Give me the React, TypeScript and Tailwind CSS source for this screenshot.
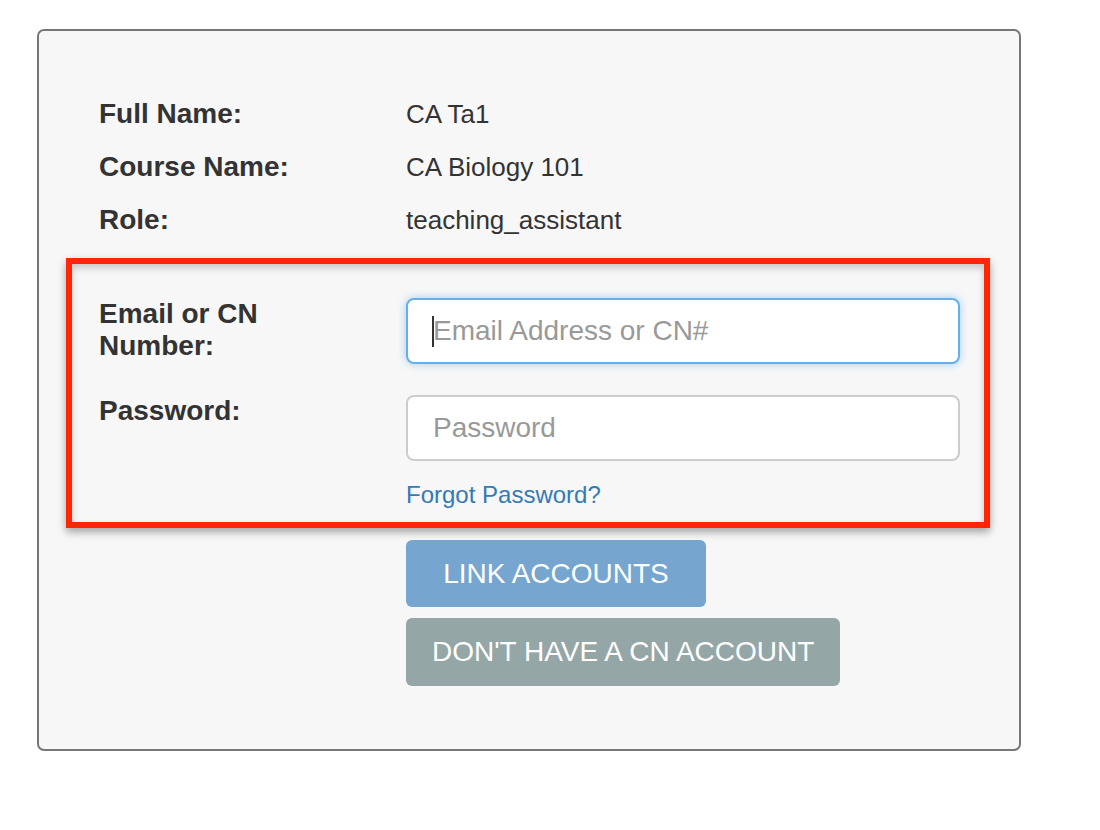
import React from 'react'

const info = [
  { label: 'Full Name:', value: 'CA Ta1' },
  { label: 'Course Name:', value: 'CA Biology 101' },
  { label: 'Role:', value: 'teaching_assistant' },
]

export default function App() {
  return (
    <div className="min-h-[830px] w-[1100px] bg-white pl-[37px] pt-[29px] font-['Liberation_Sans',Arial,sans-serif] text-[#333]">
      <div className="h-[722px] w-[984px] rounded-[7px] border-2 border-[#777] bg-[#f7f7f7] pt-[67px]">
        {/* read-only course info */}
        <div className="flex flex-col gap-[21px] pl-[60px]">
          {info.map((row) => (
            <div key={row.label} className="flex items-baseline leading-[32px]">
              <div className="w-[307px] text-[28px] font-bold">{row.label}</div>
              <div className="text-[26px]">{row.value}</div>
            </div>
          ))}
        </div>

        {/* highlighted login block */}
        <div className="ml-[27px] mt-[22px] w-[924px] border-[6px] border-[#ff2600] pb-[13px] pl-[27px] pt-[34px] shadow-[0_4px_8px_rgba(0,0,0,0.35),inset_0_4px_7px_rgba(0,0,0,0.2)]">
          <div className="flex">
            <label className="w-[307px] text-[28px] font-bold leading-[32px]">
              Email or CN
              <br />
              Number:
            </label>
            <div className="relative">
              <input
                type="text"
                placeholder="Email Address or CN#"
                className="h-[66px] w-[554px] rounded-[8px] border-2 border-[#66afe9] bg-white px-[25px] text-[28px] text-[#555] outline-none shadow-[0_0_8px_rgba(102,175,233,0.6)] placeholder:text-[#999]"
              />
              <span className="absolute left-[26px] top-[18px] h-[31px] w-[2px] bg-[#333]" />
            </div>
          </div>

          <div className="mt-[31px] flex">
            <label className="w-[307px] text-[28px] font-bold leading-[32px]">Password:</label>
            <div className="flex flex-col">
              <input
                type="password"
                placeholder="Password"
                className="h-[66px] w-[554px] rounded-[8px] border-2 border-[#ccc] bg-white px-[25px] text-[28px] text-[#555] outline-none placeholder:text-[#999]"
              />
              <a href="#" className="mt-[20px] text-[24px] leading-[28px] text-[#337ab7]">
                Forgot Password?
              </a>
            </div>
          </div>
        </div>

        {/* actions */}
        <div className="ml-[367px] mt-[12px] flex flex-col items-start gap-[11px]">
          <button className="h-[67px] w-[300px] rounded-[6px] bg-[#76a5d0] text-[28px] text-white">
            LINK ACCOUNTS
          </button>
          <button className="h-[68px] rounded-[6px] bg-[#95a6a6] px-[26px] text-[28px] text-white">
            DON'T HAVE A CN ACCOUNT
          </button>
        </div>
      </div>
    </div>
  )
}
